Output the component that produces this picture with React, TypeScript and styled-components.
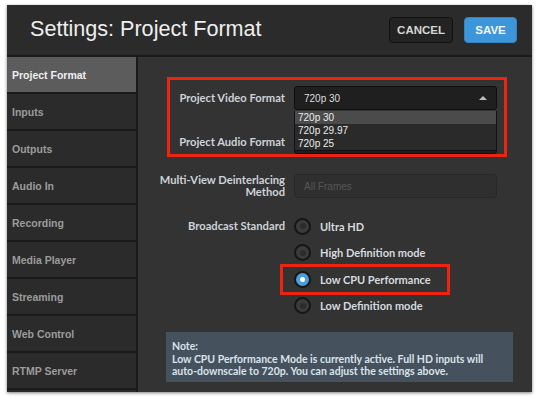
import React from "react";
import styled, { createGlobalStyle } from "styled-components";

const Global = createGlobalStyle`
  html, body { margin: 0; padding: 0; background: #ffffff; }
  body { font-family: "Liberation Sans", Arial, sans-serif; }
  * { box-sizing: border-box; }
`;

const Page = styled.div`
  width: 539px;
  height: 397px;
  padding: 5px 7px;
  background: #ffffff;
`;

const Window = styled.div`
  width: 525px;
  height: 387px;
  background: #2b2b2b;
  box-shadow: 0 1px 3px rgba(0, 0, 0, 0.5);
  display: flex;
  flex-direction: column;
  overflow: hidden;
`;

const Header = styled.header`
  height: 52px;
  flex: none;
  border-bottom: 2px solid #1a1a1a;
  display: flex;
  align-items: center;
  justify-content: space-between;
  padding: 0 15px 0 23px;
`;

const Title = styled.h1`
  margin: 0 0 3px 0;
  font-family: "Liberation Sans", Arial, sans-serif;
  font-weight: 400;
  font-size: 21.6px;
  color: #eeeeee;
`;

const Actions = styled.div`
  display: flex;
  gap: 11px;
`;

const Button = styled.button<{ $primary?: boolean }>`
  height: 26px;
  min-width: 53px;
  padding: 0 7px;
  border-radius: 4px;
  font-family: "Liberation Sans", Arial, sans-serif;
  font-weight: 700;
  font-size: 11.5px;
  cursor: pointer;
  border: 1px solid ${(p) => (p.$primary ? "#3584c4" : "#111111")};
  background: ${(p) => (p.$primary ? "#3e96da" : "#232323")};
  color: ${(p) => (p.$primary ? "#f2f7fc" : "#d6d6d6")};
`;

const Body = styled.div`
  flex: 1;
  display: flex;
  min-height: 0;
`;

const Sidebar = styled.nav`
  width: 131px;
  flex: none;
  border-right: 2px solid #1a1a1a;
  display: flex;
  flex-direction: column;
`;

const NavItem = styled.div<{ $active?: boolean }>`
  height: 37px;
  flex: none;
  border-bottom: 2px solid #1a1a1a;
  display: flex;
  align-items: center;
  padding-left: 5px;
  font-family: "Liberation Sans", Arial, sans-serif;
  font-weight: 700;
  font-size: 10.5px;
  background: ${(p) => (p.$active ? "#5c5c5c" : "#2b2b2b")};
  color: ${(p) => (p.$active ? "#efefef" : "#9c9c9c")};
`;

const Content = styled.main`
  flex: 1;
  background: #333333;
  padding: 20px 0 0 29px;
  display: flex;
  flex-direction: column;
  align-items: flex-start;
`;

const FormBox = styled.div`
  width: 340px;
  border: 3px solid #ee2410;
  padding: 6px 7px 0 0;
  display: flex;
  flex-direction: column;
  gap: 20px;
`;

const Row = styled.div<{ $top?: number; $align?: string }>`
  width: 330px;
  display: grid;
  grid-template-columns: minmax(0, 1fr) 203px;
  column-gap: 9px;
  align-items: ${(p) => p.$align ?? "center"};
  margin-top: ${(p) => p.$top ?? 0}px;
`;

const BoxRow = styled(Row)`
  width: auto;
`;

const Label = styled.div<{ $lh?: number }>`
  justify-self: end;
  width: max-content;
  text-align: right;
  font-family: Lato, "Noto Sans", sans-serif;
  font-weight: 700;
  font-size: 11.2px;
  line-height: ${(p) => p.$lh ?? 14}px;
  color: #cdd2d8;
  white-space: nowrap;
`;

const SelectWrap = styled.div`
  position: relative;
  height: 24px;
`;

const Select = styled.div`
  height: 24px;
  background: #1f1f1f;
  border: 1px solid #0f0f0f;
  border-radius: 3px;
  display: flex;
  align-items: center;
  justify-content: space-between;
  padding: 0 9px 0 9px;
  font-family: "Liberation Sans", Arial, sans-serif;
  font-size: 10px;
  color: #dedede;
`;

const Arrow = styled.span`
  width: 0;
  height: 0;
  margin-left: auto;
  border-left: 4px solid transparent;
  border-right: 4px solid transparent;
  border-bottom: 4px solid #bdbdbd;
`;

const OptionList = styled.ul`
  position: absolute;
  top: 25px;
  left: 0;
  right: 0;
  margin: 0;
  padding: 0;
  list-style: none;
  background: #2a2a2a;
  border: 1px solid #121212;
  border-top: none;
  z-index: 2;
`;

const OptionItem = styled.li<{ $selected?: boolean }>`
  height: 13px;
  line-height: 13px;
  padding-left: 3px;
  font-family: "Liberation Sans", Arial, sans-serif;
  font-size: 10px;
  color: #ececec;
  background: ${(p) => (p.$selected ? "#4b4b4b" : "transparent")};
`;

const Input = styled.div`
  height: 24px;
  background: #2f2f2f;
  border: 1px solid #282828;
  border-radius: 4px;
  display: flex;
  align-items: center;
  padding-left: 9px;
  font-family: "Liberation Sans", Arial, sans-serif;
  font-size: 10px;
  color: #575757;
`;

const RadioGroup = styled.div`
  display: flex;
  flex-direction: column;
  align-items: flex-start;
`;

const RadioOption = styled.div<{ $highlight?: boolean }>`
  height: 26.5px;
  display: flex;
  align-items: center;
  gap: 9px;
  font-family: Lato, "Noto Sans", sans-serif;
  font-weight: 700;
  font-size: 11px;
  color: #d6dade;
  ${(p) =>
    p.$highlight
      ? `
    border: 3px solid #ee2410;
    height: 31px;
    padding: 0 16px 0 11px;
    margin: -2.25px -19px -2.25px -14px;
  `
      : ""}
`;

const Radio = styled.span<{ $checked?: boolean }>`
  width: 17px;
  height: 17px;
  border-radius: 50%;
  flex: none;
  display: flex;
  align-items: center;
  justify-content: center;
  border: 2px solid #161616;
  background: ${(p) => (p.$checked ? "#4a9ddf" : "#3b3b3b")};
  &::after {
    content: "";
    width: ${(p) => (p.$checked ? 5 : 6)}px;
    height: ${(p) => (p.$checked ? 5 : 6)}px;
    border-radius: 50%;
    background: ${(p) => (p.$checked ? "#ffffff" : "#2c2c2c")};
  }
`;

const Note = styled.div`
  width: 347px;
  height: 50px;
  margin: 13px 0 0 -1px;
  background: #45525e;
  padding: 8px 6px;
  font-family: Lato, "Noto Sans", sans-serif;
  font-weight: 700;
  font-size: 10.5px;
  line-height: 12.5px;
  color: #d9e2ea;
  white-space: nowrap;
`;

const navItems = [
  "Project Format",
  "Inputs",
  "Outputs",
  "Audio In",
  "Recording",
  "Media Player",
  "Streaming",
  "Web Control",
  "RTMP Server",
];

const broadcastOptions = [
  "Ultra HD",
  "High Definition mode",
  "Low CPU Performance",
  "Low Definition mode",
];

export default function App() {
  return (
    <>
      <Global />
      <Page>
        <Window>
          <Header>
            <Title>Settings: Project Format</Title>
            <Actions>
              <Button>CANCEL</Button>
              <Button $primary>SAVE</Button>
            </Actions>
          </Header>
          <Body>
            <Sidebar>
              {navItems.map((n, i) => (
                <NavItem key={n} $active={i === 0}>
                  {n}
                </NavItem>
              ))}
            </Sidebar>
            <Content>
              <FormBox>
                <BoxRow>
                  <Label>Project Video Format</Label>
                  <SelectWrap>
                    <Select>
                      <span>720p 30</span>
                      <Arrow />
                    </Select>
                    <OptionList>
                      <OptionItem $selected>720p 30</OptionItem>
                      <OptionItem>720p 29.97</OptionItem>
                      <OptionItem>720p 25</OptionItem>
                    </OptionList>
                  </SelectWrap>
                </BoxRow>
                <BoxRow>
                  <Label>Project Audio Format</Label>
                  <SelectWrap>
                    <Select>
                      <Arrow />
                    </Select>
                  </SelectWrap>
                </BoxRow>
              </FormBox>
              <Row $top={17}>
                <Label $lh={12}>
                  Multi-View Deinterlacing
                  <br />
                  Method
                </Label>
                <Input>All Frames</Input>
              </Row>
              <Row $top={15} $align="start">
                <Label $lh={26}>Broadcast Standard</Label>
                <RadioGroup>
                  {broadcastOptions.map((o, i) => (
                    <RadioOption key={o} $highlight={i === 2}>
                      <Radio $checked={i === 2} />
                      {o}
                    </RadioOption>
                  ))}
                </RadioGroup>
              </Row>
              <Note>
                Note:
                <br />
                Low CPU Performance Mode is currently active. Full HD inputs will
                <br />
                auto-downscale to 720p. You can adjust the settings above.
              </Note>
            </Content>
          </Body>
        </Window>
      </Page>
    </>
  );
}
